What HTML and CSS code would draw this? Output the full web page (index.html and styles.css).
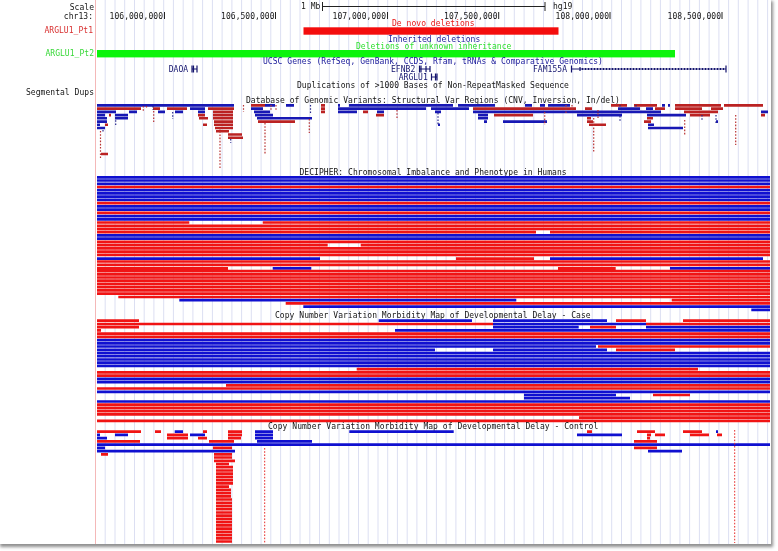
FILE: index.html
```html
<!DOCTYPE html>
<html lang="en">
<head>
<meta charset="utf-8">
<title>UCSC Genome Browser: chr13 ARGLU1 region</title>
<link rel="stylesheet" href="styles.css">
</head>
<body>
<main class="panel">
<svg class="browser" width="771" height="544" viewBox="0 0 771 544" xmlns="http://www.w3.org/2000/svg">
  <!-- base position grid -->
  <path class="grid" d="M105.2 0v544M115 0v544M124.7 0v544M134.5 0v544M144.2 0v544M153.9 0v544M163.7 0v544M173.4 0v544M183.2 0v544M192.9 0v544M202.6 0v544M212.4 0v544M222.1 0v544M231.9 0v544M241.6 0v544M251.3 0v544M261.1 0v544M270.8 0v544M280.6 0v544M290.3 0v544M300 0v544M309.8 0v544M319.5 0v544M329.3 0v544M339 0v544M348.7 0v544M358.5 0v544M368.2 0v544M378 0v544M387.7 0v544M397.4 0v544M407.2 0v544M416.9 0v544M426.7 0v544M436.4 0v544M446.1 0v544M455.9 0v544M465.6 0v544M475.4 0v544M485.1 0v544M494.8 0v544M504.6 0v544M514.3 0v544M524.1 0v544M533.8 0v544M543.5 0v544M553.3 0v544M563 0v544M572.8 0v544M582.5 0v544M592.2 0v544M602 0v544M611.7 0v544M621.5 0v544M631.2 0v544M640.9 0v544M650.7 0v544M660.4 0v544M670.2 0v544M679.9 0v544M689.6 0v544M699.4 0v544M709.1 0v544M718.9 0v544M728.6 0v544M738.3 0v544M748.1 0v544M757.8 0v544M767.6 0v544"/>
  <path class="edge" d="M95.5 0v544"/>

  <!-- side labels -->
  <text class="label right" x="94" y="10">Scale</text>
  <text class="label right" x="93" y="19">chr13:</text>
  <text class="label right label-red" x="93" y="33">ARGLU1_Pt1</text>
  <text class="label right label-green" x="94" y="56">ARGLU1_Pt2</text>
  <text class="label right" x="94" y="95">Segmental Dups</text>

  <!-- ruler -->
  <text class="label" x="301" y="9">1 Mb</text>
  <text class="label" x="553" y="9">hg19</text>
  <path class="ink" d="M322.5 2v9M322.5 6.5H545M545 2v9M164.5 12v7M275.5 12v7M387.5 12v7M498.7 12v7M610 12v7M722 12v7"/>
  <text class="label right" x="163" y="19">106,000,000</text>
  <text class="label right" x="274.5" y="19">106,500,000</text>
  <text class="label right" x="386" y="19">107,000,000</text>
  <text class="label right" x="497.5" y="19">107,500,000</text>
  <text class="label right" x="609" y="19">108,000,000</text>
  <text class="label right" x="721" y="19">108,500,000</text>

  <!-- deletion tracks -->
  <text class="label title-red" x="392" y="26">De novo deletions</text>
  <rect class="fill-red" x="303.5" y="27.3" width="255" height="7.4"/>
  <text class="label title-blue" x="388" y="41.5">Inherited deletions</text>
  <text class="label title-green" x="356" y="49">Deletions of unknown inheritance</text>
  <rect class="fill-green" x="97" y="50" width="578" height="7.4"/>

  <!-- genes -->
  <text class="label title-blue" x="263" y="64">UCSC Genes (RefSeq, GenBank, CCDS, Rfam, tRNAs &amp; Comparative Genomics)</text>
  <text class="label gene" x="168.7" y="71.5">DAOA</text>
  <text class="label gene" x="391" y="71.5">EFNB2</text>
  <text class="label gene" x="533" y="71.5">FAM155A</text>
  <text class="label gene" x="398.7" y="80">ARGLU1</text>
  <path class="gene-line" d="M192 69h5M419 69h11M431 77h6M571 69h155"/>
  <path class="gene-tick" d="M192 65.5v7M193.5 65.5v7M197 65.5v7M419.5 65.5v7M421 65.5v7M426 66v6M430 66v6M431.5 73.5v7M435.5 73.5v7M437 73.5v7M571.5 65.5v7M580 67v4M726 65.5v7"/>
  <path class="gene-dash" d="M582 69h143"/>

  <text class="label" x="297" y="87.5">Duplications of &gt;1000 Bases of Non-RepeatMasked Sequence</text>
  <text class="label" x="246" y="103">Database of Genomic Variants: Structural Var Regions (CNV, Inversion, In/del)</text>

  <!-- Database of Genomic Variants -->
  <path class="dgv dgv-blue" d="M97 105.4H234M265 105.4H275M286 105.4H294M338 105.4H340M349 105.4H453M458 105.4H495M525 105.4H532M540 105.4H545M548 105.4H570M662 105.4H665M668 105.4H670
    M190 108.6H205M251 108.6H263M338 108.6H426M431 108.6H469M618 108.6H640M646 108.6H653
    M97 111.9H116M129 111.9H137M158 111.9H165M175 111.9H183M198 111.9H205M254 111.9H270M338 111.9H357M377 111.9H384M435 111.9H441M473 111.9H661M761 111.9H768
    M97 115.1H105M115 115.1H128M255 115.1H273M478 115.1H488M577 115.1H622M647 115.1H686
    M97 118.3H107M115 118.3H128M257 118.3H312M478 118.3H488
    M97 121.6H107M484 121.6H487M503 121.6H547M716 121.6H718
    M97 124.8H100M438 124.8H440M648 124.8H654
    M97 128H105M648 128H683"/>
  <path class="dgv dgv-red" d="M251 105.4H265M321 105.4H325M611 105.4H627M634 105.4H657M675 105.4H721M724 105.4H763
    M97 108.6H141M153 108.6H160M167 108.6H187M208 108.6H234M321 108.6H325M473 108.6H576M585 108.6H592M655 108.6H665M675 108.6H702M711 108.6H723
    M213 111.9H233M321 111.9H325M363 111.9H368M684 111.9H718
    M109 115.1H111M198 115.1H205M213 115.1H233M376 115.1H384M494 115.1H533M690 115.1H710M761 115.1H765
    M199 118.3H208M213 118.3H233M587 118.3H591M647 118.3H653
    M214 121.6H233M258 121.6H295M587 121.6H593M644 121.6H651
    M105 124.8H108M203 124.8H207M214 124.8H233M589 124.8H606
    M215 128H233
    M216 131.2H229M228 134.5H242M228 137.7H243M101 154H108"/>
  <path class="dgv-dots dots-red" d="M100.5 131v27M220 128v40M265 123v32M593.7 118v34M735.7 115v30M684.7 120v15M153.7 111v11M143.3 106v6M146.5 106v3M243.5 105v7M309.3 119v14M544.7 112v13M397 110v8M276 105v5M271 105v5M566 105v8M572 105v6M598 110v9"/>
  <path class="dgv-dots dots-blue" d="M115.7 117v8M172.7 112v7M438 113v12M716 115v8M230.7 139v4M103 130v2M153 106v4M310.5 105v8M620 105v8M636 105v4M702 115v6M620 116v6"/>

  <!-- DECIPHER -->
  <text class="label" x="299.5" y="175">DECIPHER: Chromosomal Imbalance and Phenotype in Humans</text>
  <path class="row row-blue" d="M97 177.3H770M97 180.5H770M97 183.8H770M97 190.2H770M97 193.4H770M97 196.7H770M97 199.9H770M97 206.4H770M97 209.6H770M97 216.1H770M97 219.3H770M97 235.4H770M97 238.7H770
    M97 258.7H320M550 258.7H763M272.7 268.3H311.3M670 268.3H770M179.3 300.2H516.3M303.3 306.6H770M751.3 309.9H770"/>
  <path class="row row-red" d="M97 187H770M97 203.1H770M97 212.8H770M97 222.5H189.3M262.7 222.5H770M97 225.8H770M97 229H770M97 232.2H536M550 232.2H770M97 241.9H770M97 245.1H327.7M360.7 245.1H770M97 248.4H770M97 251.6H770M97 254.8H770
    M456 258.7H534M97 261.5H770M97 264.8H770M97 268.3H228M558 268.3H615.7M97 271.2H770M97 274.3H770M97 277.5H770M97 280.7H770M97 283.9H770M97 287.1H770M97 290.4H770M97 293.6H770M118.3 297H770M671.7 300.2H770M285.7 303.4H770"/>

  <!-- Developmental delay: case -->
  <text class="label" x="275" y="318">Copy Number Variation Morbidity Map of Developmental Delay - Case</text>
  <path class="row row-blue" d="M378.7 320.7H472M493 320.7H607M493 324H646M493 327.2H578.7M646 327.2H770M395 330.4H770
    M97 340.1H770M97 343.3H770M97 346.5H596M97 349.8H435M493 349.8H607M97 353H770M97 356.2H770M97 359.5H770M97 362.7H770M97 365.9H770M97 378.8H770M97 382.1H770M97 391.8H770M524 395H616M524 398.2H630M97 401.5H770"/>
  <path class="row row-red" d="M97 320.7H139M616 320.7H646M683 320.7H770M97 324H493M646 324H770M97 327.2H139M590 327.2H616M97 330.4H101M97 333.6H770M97 336.9H770
    M598 346.5H770M616 349.8H675M356.7 369.2H698M97 372.4H770M97 375.6H770M226 385.3H770M97 388.5H770M653 395H690M97 404.7H770M97 407.9H770M97 411.1H770M97 414.4H770M579 417.6H770M97 420.8H770"/>

  <!-- Developmental delay: control -->
  <text class="label" x="268" y="429">Copy Number Variation Morbidity Map of Developmental Delay - Control</text>
  <path class="row row-blue" d="M174.7 431.7H183M255 431.7H273M349.3 431.7H453.7M716 431.7H718
    M97 434.9H100M115 434.9H128M190 434.9H205M255 434.9H273M577 434.9H622
    M97 438.2H107M255 438.2H273M257 441.4H312M97 444.6H770M97 447.9H105M97 451.1H235M648 451.1H682"/>
  <path class="row row-red" d="M97 431.7H141M155 431.7H161M203 431.7H207M228 431.7H242M587 431.7H592M637 431.7H655M683 431.7H702
    M167 434.9H188M228 434.9H242M647 434.9H651M655 434.9H665M690 434.9H709M717 434.9H722
    M167 438.2H188M198 438.2H207M228 438.2H241M647 438.2H650
    M97 441.4H140M209 441.4H234M634 441.4H657M213 447.9H232M634 447.9H657M101 454.3H108
    M214 454.3H232M214 457.5H232M214 460.8H235M216 464H229M216 467.2H233M216 470.5H233M216 473.7H233M216 476.9H233M216 480.2H233M216 483.4H233M216 486.6H229M216 489.8H231M216 493.1H231M216 496.3H231M216 499.5H232M216 502.8H232M216 506H232M216 509.2H232M216 512.5H232M216 515.7H232M216 518.9H232M216 522.1H232M216 525.4H232M216 528.6H232M216 531.8H232M216 535.1H232M216 538.3H232M216 541.5H232"/>
  <path class="control-dots" d="M264.7 448v95M734.7 430v113"/>
</svg>
</main>
</body>
</html>
```

FILE: styles.css
```css
html, body {
  margin: 0;
  background: #ffffff;
}

body {
  width: 778px;
  height: 551px;
  overflow: hidden;
}

.panel {
  width: 771px;
  height: 544px;
  background: #ffffff;
  box-shadow: 1px 2px 3px 1px #8f8f8f;
}

.browser {
  display: block;
  filter: blur(0.4px);
}

.label {
  font-family: "DejaVu Sans Mono", "Liberation Mono", monospace;
  font-size: 8px;
  letter-spacing: 0.04px;
  fill: #141414;
}

.right { text-anchor: end; }
.label-red { fill: #d83030; }
.label-green { fill: #38d838; }
.title-red { fill: #e81818; }
.title-blue { fill: #1a1a9a; }
.title-green { fill: #30e030; }
.gene { fill: #14146e; }

.grid { stroke: #dcdff2; stroke-width: 1; fill: none; }
.edge { stroke: #f4b8b8; stroke-width: 1; fill: none; }
.ink { stroke: #222222; stroke-width: 1; fill: none; }

.fill-red { fill: #f40d0d; }
.fill-green { fill: #0cf40c; }

.gene-line { stroke: #14146e; stroke-width: 1; fill: none; }
.gene-tick { stroke: #14146e; stroke-width: 1.2; fill: none; }
.gene-dash { stroke: #14146e; stroke-width: 2; stroke-dasharray: 1 2; fill: none; }

.dgv { stroke-width: 2.6; fill: none; }
.dgv-blue { stroke: #1818b4; }
.dgv-red { stroke: #bb2222; }

.dgv-dots { stroke-width: 1.2; stroke-dasharray: 1.6 1.6; fill: none; }
.dots-red { stroke: #b83232; }
.dots-blue { stroke: #28288c; }

.row { stroke-width: 2.7; fill: none; }
.row-blue { stroke: #1010d0; }
.row-red { stroke: #f01414; }

.control-dots { stroke: #e62a2a; stroke-width: 1; stroke-dasharray: 1.6 1.6; fill: none; }
```
